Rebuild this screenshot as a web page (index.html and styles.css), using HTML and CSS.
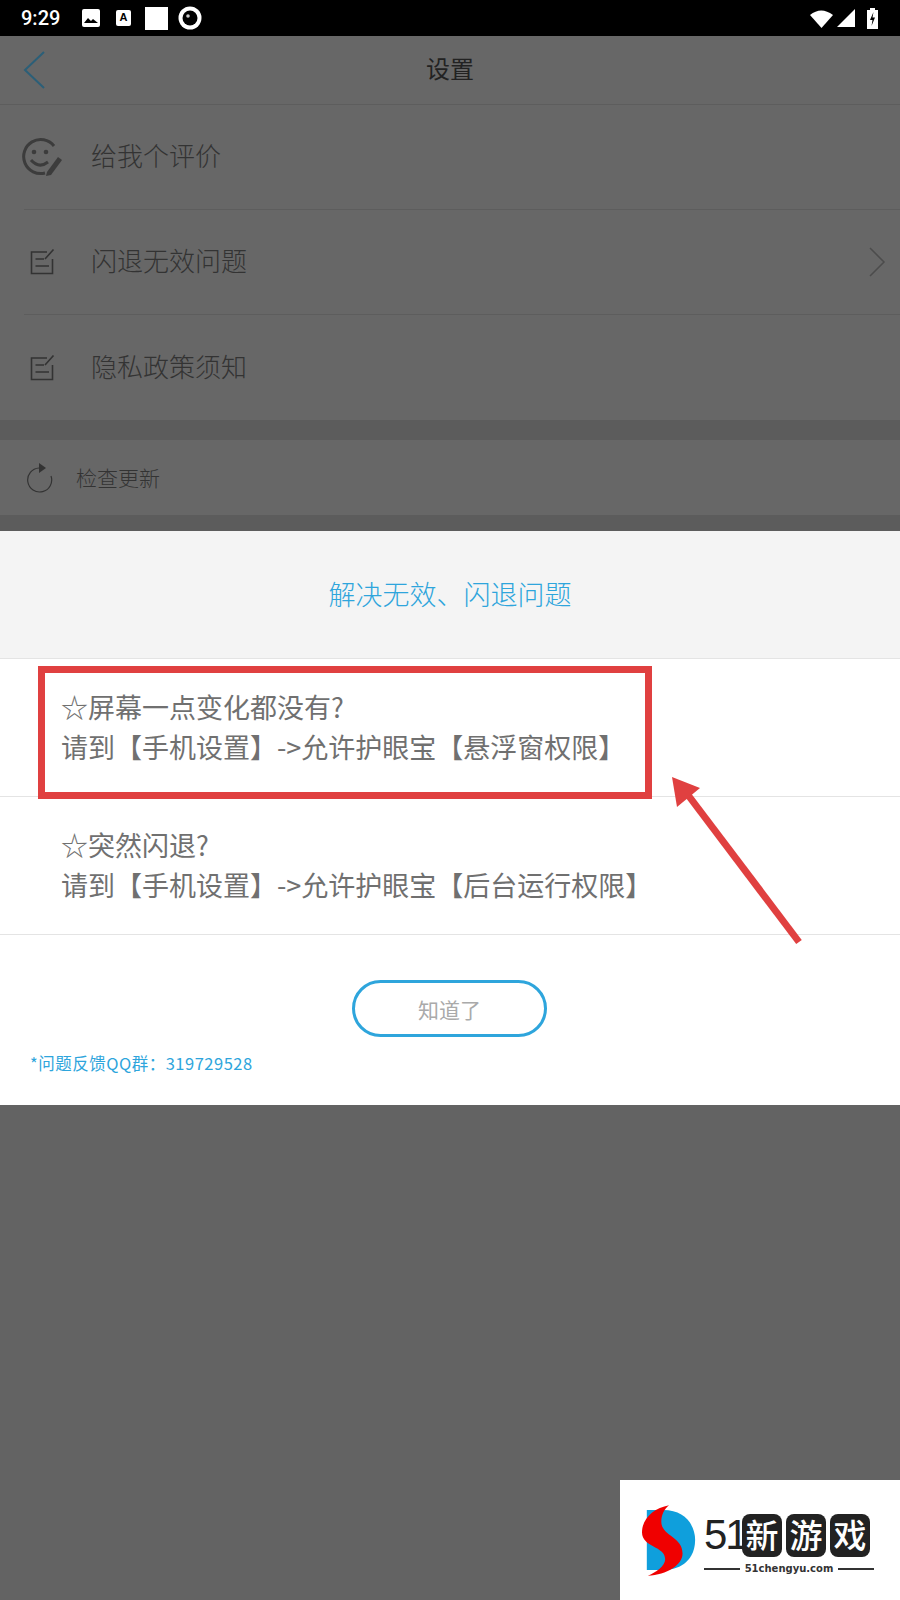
FILE: index.html
```html
<!DOCTYPE html>
<html lang="zh-CN">
<head>
    <meta charset="UTF-8">
    <meta name="viewport" content="width=device-width, initial-scale=1.0">
    <title>设置</title>
    <link rel="stylesheet" href="styles.css">
</head>
<body>
<div class="page">
    <header class="status-bar">
        <span class="clock">9:29</span>
        <svg class="st-icon" width="18" height="18" viewBox="0 0 18 18"><rect width="18" height="18" rx="2" fill="#fff"/><path d="M2 14l4-5 3 3 2-2 5 4z" fill="#000"/></svg>
        <span class="st-a">A</span>
        <span class="st-square"></span>
        <svg class="st-eye" width="24" height="24" viewBox="0 0 24 24"><circle cx="12" cy="12" r="11.500" fill="#fff"/><circle cx="12" cy="12" r="7.500" fill="#000"/><circle cx="10" cy="10" r="1.800" fill="#ccc"/></svg>
        <span class="status-right">
            <svg width="23" height="19" viewBox="0 0 23 19"><path d="M0 6Q11 -3 23 6L11.500 19z" fill="#fff"/></svg>
            <svg width="18" height="18" viewBox="0 0 18 18"><path d="M18 0V18H0z" fill="#fff"/></svg>
            <svg class="battery" width="11" height="21" viewBox="0 0 11 21"><path d="M3 0h5v2h3v19H0V2h3z" fill="#fff"/><path d="M6.500 4L3 12h2.500L4.500 18 8 9.500H5.500z" fill="#000"/></svg>
        </span>
    </header>

    <nav class="app-bar">
        <svg class="back" width="24" height="40" viewBox="0 0 24 40"><path d="M21 2L2 20l19 18" fill="none" stroke="#2b5f78" stroke-width="2"/></svg>
        <h1 class="app-title">设置</h1>
    </nav>

    <section class="settings">
        <div class="row">
            <svg class="row-icon smile" width="42" height="38" viewBox="0 0 42 38">
                <path d="M33 8A17 17 0 1 0 24 35" fill="none" stroke="#3c3c3c" stroke-width="3"/>
                <circle cx="13" cy="14" r="2.300" fill="#3c3c3c"/><circle cx="25" cy="14" r="2.300" fill="#3c3c3c"/>
                <path d="M10 22q8 9 17 2" fill="none" stroke="#3c3c3c" stroke-width="3"/>
                <path d="M26 34l11-15 4 3-11 15-5 1z" fill="#3c3c3c"/>
            </svg>
            <span class="row-text">给我个评价</span>
        </div>
        <div class="row">
            <svg class="row-icon note" width="25" height="26" viewBox="0 0 25 26">
                <path d="M17 3H1.500V24.500H22.500V10" fill="none" stroke="#333" stroke-width="1.600"/>
                <path d="M5.500 10H14M5.500 17H19M15 10L23.500 0.500" fill="none" stroke="#333" stroke-width="1.600"/>
            </svg>
            <span class="row-text">闪退无效问题</span>
            <svg class="chevron" width="18" height="32" viewBox="0 0 18 32"><path d="M2 2l14 14L2 30" fill="none" stroke="#4c4c4c" stroke-width="1.500"/></svg>
        </div>
        <div class="row row-last">
            <svg class="row-icon note" width="25" height="26" viewBox="0 0 25 26">
                <path d="M17 3H1.500V24.500H22.500V10" fill="none" stroke="#333" stroke-width="1.600"/>
                <path d="M5.500 10H14M5.500 17H19M15 10L23.500 0.500" fill="none" stroke="#333" stroke-width="1.600"/>
            </svg>
            <span class="row-text">隐私政策须知</span>
        </div>
    </section>

    <div class="band">
        <section class="update-row">
            <svg width="27" height="30" viewBox="0 0 27 30">
                <path d="M13 5A12 12 0 1 0 25 13" fill="none" stroke="#333" stroke-width="1.200"/>
                <path d="M13 0l7 5-7 5z" fill="#333"/>
            </svg>
            <span class="update-text">检查更新</span>
        </section>
    </div>

    <section class="sheet">
        <h2 class="sheet-title">解决无效、闪退问题</h2>
        <div class="tip">
            <p>☆屏幕一点变化都没有?</p>
            <p>请到【手机设置】-&gt;允许护眼宝【悬浮窗权限】</p>
        </div>
        <div class="tip">
            <p>☆突然闪退?</p>
            <p>请到【手机设置】-&gt;允许护眼宝【后台运行权限】</p>
        </div>
        <div class="sheet-foot">
            <button class="ok-btn">知道了</button>
            <p class="qq">*问题反馈QQ群：319729528</p>
        </div>
    </section>

    <!-- annotations drawn on top of the screenshot -->
    <div class="red-box"></div>
    <svg class="red-arrow" width="140" height="180" viewBox="0 0 140 180">
        <path d="M134 169L20 18" fill="none" stroke="#e04040" stroke-width="7"/>
        <path d="M7 4L35 15 12 34z" fill="#e04040"/>
    </svg>

    <div class="watermark">
        <svg class="wm-logo" width="56" height="74" viewBox="0 0 58 74">
            <path d="M5 5H22C44 5 55 20 55 36C55 55 42 67 22 67H5z" fill="#0f9fdc"/>
            <path d="M28 0C12 3 0 14 0 28C0 44 24 42 24 56C24 63 14 70 6 73C26 72 42 62 42 50C42 32 20 32 20 17C20 10 23 4 28 0z" fill="#f00000"/>
        </svg>
        <div class="wm-right">
            <div class="wm-name">
                <span class="wm-51">51</span>
                <span class="wm-char">新</span>
                <span class="wm-char">游</span>
                <span class="wm-char">戏</span>
            </div>
            <div class="wm-url"><i></i><span>51chengyu.com</span><i></i></div>
        </div>
    </div>
</div>
</body>
</html>
```

FILE: styles.css
```css
* {
    box-sizing: border-box;
}
body {
    margin: 0;
    font-family: "Noto Sans CJK SC", "Noto Sans", sans-serif;
}
p, h1, h2 {
    margin: 0;
    font-weight: normal;
}
.page {
    position: relative;
    width: 900px;
    height: 1600px;
    background: #636363;
    overflow: hidden;
}

/* status bar */
.status-bar {
    height: 36px;
    background: #000;
    display: flex;
    align-items: center;
    padding: 0 22px 0 21px;
}
.clock {
    width: 61px;
    color: #fff;
    font: 500 20px Roboto, sans-serif;
}
.st-a {
    width: 15px;
    height: 16px;
    margin-left: 16px;
    background: #fff;
    border-radius: 2px;
    color: #000;
    font: bold 11px/15px "Liberation Sans", sans-serif;
    text-align: center;
}
.st-square {
    width: 23px;
    height: 23px;
    margin-left: 14px;
    background: #fff;
}
.st-eye {
    margin-left: 10px;
}
.status-right {
    margin-left: auto;
    display: flex;
    align-items: center;
    gap: 4px;
}
.battery {
    margin-left: 8px;
}

/* dimmed settings page */
.app-bar {
    height: 69px;
    position: relative;
    display: flex;
    align-items: center;
    justify-content: center;
    padding-bottom: 6px;
    background: #676767;
    border-bottom: 1px solid #5d5d5d;
}
.back {
    position: absolute;
    left: 23px;
    top: 14px;
}
.app-title {
    color: #222;
    font-size: 24px;
}
.settings {
    background: #676767;
}
.row {
    height: 105px;
    margin-left: 24px;
    padding-bottom: 5px;
    display: flex;
    align-items: center;
    border-bottom: 1px solid #5d5d5d;
    position: relative;
}
.row-last {
    border-bottom: 0;
}
.row-icon {
    flex: none;
}
.smile {
    margin: 5px 28px 0 -3px;
}
.note {
    margin: 5px 36px 0 6px;
}
.row-text {
    color: #333;
    font-size: 26px;
    font-weight: 300;
}
.chevron {
    position: absolute;
    right: 14px;
    top: 36px;
}
.band {
    padding: 20px 0 16px;
    background: #5c5c5c;
}
.update-row {
    height: 75px;
    padding-left: 26px;
    display: flex;
    align-items: center;
    gap: 23px;
    background: #676767;
}
.update-text {
    margin-bottom: 2px;
    color: #333;
    font-size: 21px;
    font-weight: 300;
}
.sheet {
    background: #fff;
}
.sheet-title {
    height: 128px;
    line-height: 126px;
    text-align: center;
    color: #2ea5dc;
    font-size: 27px;
    font-weight: 300;
    background: #f4f4f4;
    border-bottom: 1px solid #e4e4e4;
}
.tip {
    height: 138px;
    padding: 28px 0 0 61px;
    color: #707070;
    font-size: 27px;
    line-height: 40px;
    border-bottom: 1px solid #e4e4e4;
}
.sheet-foot {
    height: 170px;
    padding-top: 45px;
}
.ok-btn {
    display: block;
    width: 195px;
    height: 57px;
    margin-left: 352px;
    background: #fff;
    border: 3px solid #2ea5dc;
    border-radius: 29px;
    color: #aaa;
    font: 21px "Noto Sans CJK SC", sans-serif;
}
.qq {
    margin: 14px 0 0 30px;
    color: #2ea5dc;
    font-size: 16.500px;
    line-height: 24px;
    letter-spacing: 0.500px;
}

/* red marks */
.red-box {
    position: absolute;
    left: 38px;
    top: 666px;
    width: 614px;
    height: 133px;
    border: 7px solid #e04040;
}
.red-arrow {
    position: absolute;
    left: 665px;
    top: 773px;
}

/* site watermark */
.watermark {
    position: absolute;
    left: 620px;
    top: 1480px;
    width: 280px;
    height: 120px;
    background: #fff;
    padding: 24px 0 0 22px;
    display: flex;
    gap: 6px;
}
.wm-logo {
    flex: none;
}
.wm-right {
    width: 170px;
}
.wm-name {
    display: flex;
    align-items: center;
    height: 44px;
    margin-top: 9px;
    gap: 4px;
}
.wm-51 {
    width: 34px;
    color: #222;
    font: 42px/44px "Liberation Sans", sans-serif;
    letter-spacing: -2px;
}
.wm-char {
    width: 40px;
    height: 43px;
    background: #222;
    border-radius: 8px;
    color: #fff;
    font-size: 33px;
    font-weight: 500;
    line-height: 41px;
    text-align: center;
}
.wm-url {
    display: flex;
    align-items: center;
    gap: 5px;
    margin-top: 3px;
    color: #333;
    font: bold 10px/18px "DejaVu Sans", sans-serif;
}
.wm-url i {
    flex: 1;
    height: 2px;
    background: #333;
}
```
